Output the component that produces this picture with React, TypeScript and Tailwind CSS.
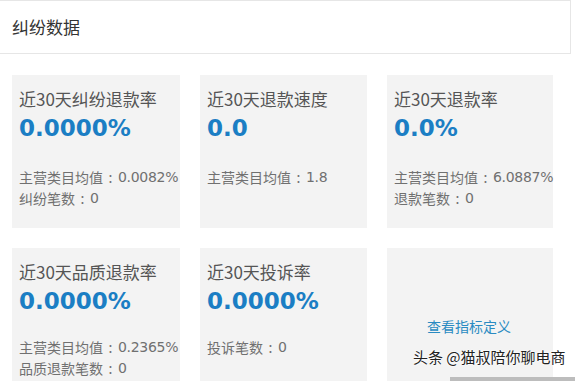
import React from 'react';

interface Metric {
  title: string;
  value: string;
  lines: [string, string][];
}

const metrics: Metric[] = [
  { title: '近30天纠纷退款率', value: '0.0000%', lines: [['主营类目均值', '0.0082%'], ['纠纷笔数', '0']] },
  { title: '近30天退款速度', value: '0.0', lines: [['主营类目均值', '1.8']] },
  { title: '近30天退款率', value: '0.0%', lines: [['主营类目均值', '6.0887%'], ['退款笔数', '0']] },
  { title: '近30天品质退款率', value: '0.0000%', lines: [['主营类目均值', '0.2365%'], ['品质退款笔数', '0']] },
  { title: '近30天投诉率', value: '0.0000%', lines: [['投诉笔数', '0']] },
];

const cjk = "font-['Noto_Sans_CJK_SC',sans-serif]";

function MetricCard({ m, tall }: { m: Metric; tall?: boolean }) {
  return (
    <div className={`bg-[#f3f3f3] px-[7px] pt-[12px] ${tall ? 'h-[153px]' : 'h-[140px]'}`}>
      <div className={`${cjk} text-[17px] leading-[24px] text-[#555] whitespace-nowrap`}>{m.title}</div>
      <div className="font-['DejaVu_Sans',sans-serif] font-bold text-[23px] leading-[30px] text-[#1b7ec4] mt-[2px]">
        {m.value}
      </div>
      <div className={tall ? 'mt-[24px]' : 'mt-[21px]'}>
        {m.lines.map(([label, val]) => (
          <div key={label} className="flex items-center h-[21px] text-[#707070] whitespace-nowrap">
            <span className={`${cjk} text-[14px] shrink-0`}>{label}</span>
            <span className={`${cjk} text-[14px] w-[15px] shrink-0 text-center`}>:</span>
            <span className="font-['DejaVu_Sans',sans-serif] text-[14px] tracking-[-0.3px] shrink-0">{val}</span>
          </div>
        ))}
      </div>
    </div>
  );
}

export default function App() {
  return (
    <div className="relative w-[575px] h-[381px] overflow-hidden bg-white">
      {/* Header */}
      <div className="h-[54px] mr-[4px] border-t border-b border-r border-[#e6e6e6] flex items-center px-[12px]">
        <span className={`${cjk} text-[17px] text-[#333]`}>纠纷数据</span>
      </div>

      {/* Cards */}
      <div className="grid grid-cols-[168px_167px_166px] gap-x-[20px] gap-y-[20px] pl-[12px] pt-[21px]">
        {metrics.slice(0, 3).map((m) => (
          <MetricCard key={m.title} m={m} tall />
        ))}
        {metrics.slice(3).map((m) => (
          <MetricCard key={m.title} m={m} />
        ))}
        <div className="bg-[#f3f3f3] h-[140px] flex items-center justify-center pt-[16px]">
          <a className={`${cjk} text-[14px] text-[#2a8bc2] -ml-[2px]`}>查看指标定义</a>
        </div>
      </div>

      {/* Watermark */}
      <div className="absolute left-[450px] top-[377px] w-[125px] h-[4px] bg-[#bdbdbd]" />
      <div
        className={`absolute left-[413px] top-[347px] ${cjk} text-[15px] leading-[20px] text-[#222] whitespace-nowrap [text-shadow:0_0_2px_#fff,0_0_2px_#fff,0_0_2px_#fff]`}
      >
        头条 @猫叔陪你聊电商
      </div>
    </div>
  );
}
